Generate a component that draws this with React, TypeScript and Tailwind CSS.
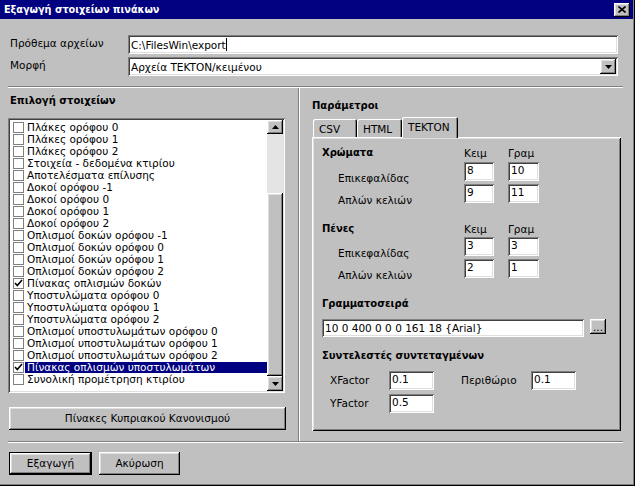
import React from "react";

const raised =
  "shadow-[inset_-1px_-1px_#000000,inset_1px_1px_#ffffff,inset_-2px_-2px_#808080,inset_2px_2px_#dfdfdf]";
const sunken =
  "shadow-[inset_1px_1px_#808080,inset_-1px_-1px_#ffffff,inset_2px_2px_#404040,inset_-2px_-2px_#dfdfdf]";

const items: { t: string; c?: boolean; s?: boolean }[] = [
  { t: "Πλάκες ορόφου 0" },
  { t: "Πλάκες ορόφου 1" },
  { t: "Πλάκες ορόφου 2" },
  { t: "Στοιχεία - δεδομένα κτιρίου" },
  { t: "Αποτελέσματα επίλυσης" },
  { t: "Δοκοί ορόφου -1" },
  { t: "Δοκοί ορόφου 0" },
  { t: "Δοκοί ορόφου 1" },
  { t: "Δοκοί ορόφου 2" },
  { t: "Οπλισμοί δοκών ορόφου -1" },
  { t: "Οπλισμοί δοκών ορόφου 0" },
  { t: "Οπλισμοί δοκών ορόφου 1" },
  { t: "Οπλισμοί δοκών ορόφου 2" },
  { t: "Πίνακας οπλισμών δοκών", c: true },
  { t: "Υποστυλώματα ορόφου 0" },
  { t: "Υποστυλώματα ορόφου 1" },
  { t: "Υποστυλώματα ορόφου 2" },
  { t: "Οπλισμοί υποστυλωμάτων ορόφου 0" },
  { t: "Οπλισμοί υποστυλωμάτων ορόφου 1" },
  { t: "Οπλισμοί υποστυλωμάτων ορόφου 2" },
  { t: "Πίνακας οπλισμών υποστυλωμάτων", c: true, s: true },
  { t: "Συνολική προμέτρηση κτιρίου" },
];

function Down() {
  return (
    <svg width="7" height="4" viewBox="0 0 7 4">
      <path d="M0 0 H7 L3.5 4 Z" fill="#000" />
    </svg>
  );
}
function Up() {
  return (
    <svg width="7" height="4" viewBox="0 0 7 4">
      <path d="M0 4 H7 L3.5 0 Z" fill="#000" />
    </svg>
  );
}

function SmallInput({ v, w }: { v: string; w: string }) {
  return (
    <div className={`${w} h-[19px] bg-white ${sunken} pl-[3px] pt-[2px] leading-[13px] shrink-0`}>{v}</div>
  );
}

export default function App() {
  return (
    <div className="w-[635px] h-[486px] bg-[#c0c0c0] font-['DejaVu_Sans',sans-serif] text-[10.5px] text-black flex flex-col pr-[2px] pb-[2px] shadow-[inset_-1px_-1px_#000000,inset_-2px_-2px_#808080] overflow-hidden">
      {/* Title bar */}
      <div className="h-[19px] bg-[#000080] flex items-center pl-[4px] pr-[3px] shrink-0">
        <span className="text-white font-bold text-[9.7px] leading-[19px] whitespace-nowrap">
          Εξαγωγή στοιχείων πινάκων
        </span>
        <div className={`ml-auto w-[16px] h-[14px] bg-[#c0c0c0] ${raised} flex items-center justify-center`}>
          <svg width="8" height="7" viewBox="0 0 8 7">
            <path d="M0.5 0.5 L7.5 6.5 M7.5 0.5 L0.5 6.5" stroke="#000" strokeWidth="1.6" />
          </svg>
        </div>
      </div>

      {/* Top fields */}
      <div className="mt-[16px] flex items-center h-[19px] pl-[10px]">
        <div className="w-[118px] leading-[14px] -mt-[4px]">Πρόθεμα αρχείων</div>
        <div className={`w-[490px] h-[19px] bg-white ${sunken} pl-[3px] flex items-center`}>
          <span className="leading-[14px]">C:\FilesWin\export</span>
          <span className="w-[1px] h-[13px] bg-black" />
        </div>
      </div>
      <div className="mt-[3px] flex items-center h-[19px] pl-[10px]">
        <div className="w-[118px] leading-[14px] -mt-[4px]">Μορφή</div>
        <div className={`w-[490px] h-[19px] bg-white ${sunken} pl-[3px] pr-[2px] flex items-center`}>
          <span className="leading-[14px]">Αρχεία TEKTON/κειμένου</span>
          <div className={`ml-auto w-[16px] h-[15px] bg-[#c0c0c0] ${raised} flex items-center justify-center`}>
            <Down />
          </div>
        </div>
      </div>

      <div className="mt-[10px] ml-[8px] w-[615px] h-[2px] border-t border-t-[#808080] border-b border-b-white" />

      {/* Main area */}
      <div className="flex h-[353px]">
        {/* Left column */}
        <div className="w-[290px] ml-[8px] flex flex-col">
          <div className="mt-[6px] h-[14px] leading-[14px] pl-[2px] font-bold text-[10px]">Επιλογή στοιχείων</div>
          <div className={`mt-[10px] w-[277px] h-[275px] bg-white ${sunken} p-[2px] flex`}>
            <div className="flex-1 flex flex-col overflow-hidden pt-[1px]">
              {items.map((it, i) => (
                <div key={i} className="flex items-center h-[12px] shrink-0">
                  <div className="ml-[3px] w-[11px] h-[11px] border border-[#808080] bg-white flex items-center justify-center shrink-0">
                    {it.c && (
                      <svg width="9" height="8" viewBox="0 0 9 8">
                        <path d="M1 4 L3.3 6.5 L8 1" stroke="#000" strokeWidth="1.6" fill="none" />
                      </svg>
                    )}
                  </div>
                  <div
                    className={
                      it.s
                        ? "ml-[1px] flex-1 h-[11px] pl-[2px] bg-[#000080] text-white leading-[11px] whitespace-nowrap"
                        : "ml-[1px] flex-1 h-[11px] pl-[2px] leading-[11px] whitespace-nowrap"
                    }
                  >
                    {it.t}
                  </div>
                </div>
              ))}
            </div>
            <div className="w-[16px] flex flex-col bg-[#e4e4e4]">
              <div className={`h-[14px] bg-[#c0c0c0] ${raised} flex items-center justify-center`}>
                <Up />
              </div>
              <div className="h-[59px]" />
              <div className={`flex-1 bg-[#c0c0c0] ${raised}`} />
              <div className={`h-[15px] bg-[#c0c0c0] ${raised} flex items-center justify-center`}>
                <Down />
              </div>
            </div>
          </div>
          <div className={`mt-[14px] ml-[1px] w-[277px] h-[23px] ${raised} flex items-center justify-center`}>
            Πίνακες Κυπριακού Κανονισμού
          </div>
        </div>

        {/* Vertical separator */}
        <div className="w-[2px] h-full border-l border-l-[#808080] border-r border-r-white" />

        {/* Right column */}
        <div className="flex-1 flex flex-col pl-[12px]">
          <div className="mt-[11px] h-[14px] leading-[14px] font-bold text-[10px]">Παράμετροι</div>
          <div className="mt-[4px] h-[20px] flex items-end pl-[1px] relative z-10">
            <div className="w-[44px] h-[18px] rounded-t-[2px] shadow-[inset_1px_1px_#ffffff,inset_-1px_0_#000000,inset_-2px_0_#808080] pl-[6px] leading-[18px] pt-[1px]">
              CSV
            </div>
            <div className="w-[45px] h-[18px] rounded-t-[2px] shadow-[inset_1px_1px_#ffffff,inset_-1px_0_#000000,inset_-2px_0_#808080] pl-[6px] leading-[18px] pt-[1px]">
              HTML
            </div>
            <div className="w-[56px] h-[21px] -mb-[1px] bg-[#c0c0c0] rounded-t-[2px] shadow-[inset_1px_1px_#ffffff,inset_-1px_0_#000000,inset_-2px_0_#808080] pl-[6px] leading-[18px] pt-[1px]">
              TEKTON
            </div>
          </div>
          <div className="w-[309px] h-[294px] shadow-[inset_1px_1px_#ffffff,inset_-1px_-1px_#000000,inset_2px_2px_#dfdfdf,inset_-2px_-2px_#808080] pl-[10px] flex flex-col">
            {/* Χρώματα */}
            <div className="mt-[9px] h-[14px] flex leading-[14px]">
              <div className="w-[142px] font-bold text-[10px]">Χρώματα</div>
              <div className="w-[44px]">Κειμ</div>
              <div>Γραμ</div>
            </div>
            <div className="mt-[2px] h-[19px] flex items-start">
              <div className="w-[142px] pl-[16px] pt-[9px] leading-[14px]">Επικεφαλίδας</div>
              <SmallInput v="8" w="w-[30px]" />
              <div className="w-[14px]" />
              <SmallInput v="10" w="w-[31px]" />
            </div>
            <div className="mt-[3px] h-[19px] flex items-start">
              <div className="w-[142px] pl-[16px] pt-[9px] leading-[14px]">Απλών κελιών</div>
              <SmallInput v="9" w="w-[30px]" />
              <div className="w-[14px]" />
              <SmallInput v="11" w="w-[31px]" />
            </div>

            {/* Πένες */}
            <div className="mt-[19px] h-[14px] flex leading-[14px]">
              <div className="w-[142px] font-bold text-[10px]">Πένες</div>
              <div className="w-[44px]">Κειμ</div>
              <div>Γραμ</div>
            </div>
            <div className="mt-[1px] h-[19px] flex items-start">
              <div className="w-[142px] pl-[16px] pt-[9px] leading-[14px]">Επικεφαλίδας</div>
              <SmallInput v="3" w="w-[30px]" />
              <div className="w-[14px]" />
              <SmallInput v="3" w="w-[31px]" />
            </div>
            <div className="mt-[3px] h-[19px] flex items-start">
              <div className="w-[142px] pl-[16px] pt-[9px] leading-[14px]">Απλών κελιών</div>
              <SmallInput v="2" w="w-[30px]" />
              <div className="w-[14px]" />
              <SmallInput v="1" w="w-[31px]" />
            </div>

            {/* Γραμματοσειρά */}
            <div className="mt-[19px] h-[14px] leading-[14px] font-bold text-[10px]">Γραμματοσειρά</div>
            <div className="mt-[8px] flex items-start">
              <div className={`w-[262px] h-[18px] bg-white ${sunken} pl-[3px] leading-[18px]`}>
                10 0 400 0 0 0 161 18 {"{Arial}"}
              </div>
              <div className={`ml-[6px] w-[16px] h-[15px] ${raised} flex items-end justify-center pb-[3px] leading-[8px]`}>
                ...
              </div>
            </div>

            {/* Συντελεστές */}
            <div className="mt-[12px] h-[14px] leading-[14px] font-bold text-[10px]">Συντελεστές συντεταγμένων</div>
            <div className="mt-[8px] h-[19px] flex items-center">
              <div className="w-[67px] pl-[8px]">XFactor</div>
              <SmallInput v="0.1" w="w-[45px]" />
              <div className="w-[97px] pl-[27px]">Περιθώριο</div>
              <SmallInput v="0.1" w="w-[45px]" />
            </div>
            <div className="mt-[4px] h-[19px] flex items-center">
              <div className="w-[67px] pl-[8px]">YFactor</div>
              <SmallInput v="0.5" w="w-[45px]" />
            </div>
          </div>
        </div>
      </div>

      <div className="ml-[8px] w-[615px] h-[2px] border-t border-t-[#808080] border-b border-b-white" />

      {/* Bottom buttons */}
      <div className="mt-[9px] ml-[9px] flex gap-[7px]">
        <div className="w-[83px] h-[23px] border border-black">
          <div className={`w-full h-full ${raised} flex items-center justify-center`}>Εξαγωγή</div>
        </div>
        <div className={`w-[81px] h-[23px] ${raised} flex items-center justify-center`}>Ακύρωση</div>
      </div>
    </div>
  );
}
